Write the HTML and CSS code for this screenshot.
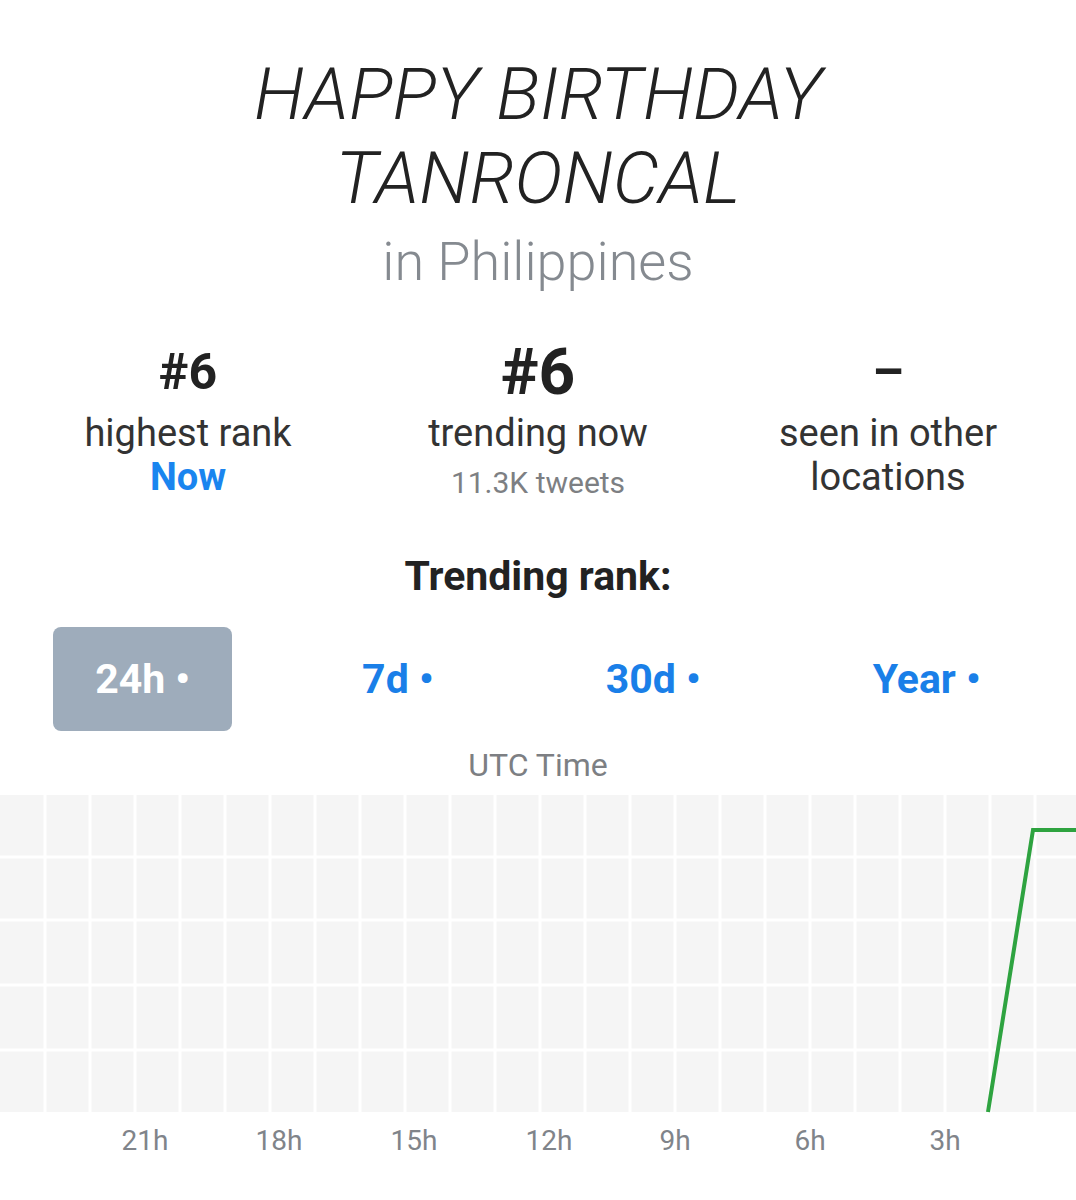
FILE: index.html
```html
<!DOCTYPE html>
<html lang="en">
<head>
    <meta charset="UTF-8">
    <meta name="viewport" content="width=device-width, initial-scale=1.0">
    <title>Happy Birthday Tanroncal - Trends</title>
    <link rel="stylesheet" href="styles.css">
</head>
<body>
    <div class="page">
        <h1 class="trend-title">HAPPY BIRTHDAY<br>TANRONCAL</h1>
        <p class="trend-place">in Philippines</p>

        <div class="stats">
            <div class="stat">
                <div class="stat-value">#6</div>
                <div class="stat-label">highest rank</div>
                <div class="stat-link">Now</div>
            </div>
            <div class="stat">
                <div class="stat-value big">#6</div>
                <div class="stat-label">trending now</div>
                <div class="stat-sub">11.3K tweets</div>
            </div>
            <div class="stat">
                <div class="stat-value">–</div>
                <div class="stat-label">seen in other<br>locations</div>
            </div>
        </div>

        <h2 class="section-title">Trending rank:</h2>

        <div class="ranges">
            <button class="range active">24h •</button>
            <button class="range">7d •</button>
            <button class="range">30d •</button>
            <button class="range">Year •</button>
        </div>

        <div class="axis-title">UTC Time</div>

        <svg class="chart" width="1076" height="372" viewBox="0 0 1076 372">
            <rect x="0" y="0" width="1076" height="317" fill="#f5f5f5"/>
            <g stroke="#ffffff" stroke-width="3">
                <line x1="45" y1="0" x2="45" y2="317"/>
                <line x1="90" y1="0" x2="90" y2="317"/>
                <line x1="135" y1="0" x2="135" y2="317"/>
                <line x1="180" y1="0" x2="180" y2="317"/>
                <line x1="225" y1="0" x2="225" y2="317"/>
                <line x1="270" y1="0" x2="270" y2="317"/>
                <line x1="315" y1="0" x2="315" y2="317"/>
                <line x1="360" y1="0" x2="360" y2="317"/>
                <line x1="405" y1="0" x2="405" y2="317"/>
                <line x1="450" y1="0" x2="450" y2="317"/>
                <line x1="495" y1="0" x2="495" y2="317"/>
                <line x1="540" y1="0" x2="540" y2="317"/>
                <line x1="585" y1="0" x2="585" y2="317"/>
                <line x1="630" y1="0" x2="630" y2="317"/>
                <line x1="675" y1="0" x2="675" y2="317"/>
                <line x1="720" y1="0" x2="720" y2="317"/>
                <line x1="765" y1="0" x2="765" y2="317"/>
                <line x1="810" y1="0" x2="810" y2="317"/>
                <line x1="855" y1="0" x2="855" y2="317"/>
                <line x1="900" y1="0" x2="900" y2="317"/>
                <line x1="945" y1="0" x2="945" y2="317"/>
                <line x1="990" y1="0" x2="990" y2="317"/>
                <line x1="1035" y1="0" x2="1035" y2="317"/>
                <line x1="0" y1="62" x2="1076" y2="62"/>
                <line x1="0" y1="125" x2="1076" y2="125"/>
                <line x1="0" y1="190" x2="1076" y2="190"/>
                <line x1="0" y1="255" x2="1076" y2="255"/>
            </g>
            <polyline points="988,317 1033,35 1076,35" fill="none" stroke="#2ea340" stroke-width="4"/>
            <g class="tick">
                <text x="145" y="355">21h</text>
                <text x="279" y="355">18h</text>
                <text x="414" y="355">15h</text>
                <text x="549" y="355">12h</text>
                <text x="675" y="355">9h</text>
                <text x="810" y="355">6h</text>
                <text x="945" y="355">3h</text>
            </g>
        </svg>
    </div>
</body>
</html>
```

FILE: styles.css
```css
body {
    font-family: Roboto, "Liberation Sans", sans-serif;
    background-color: #fff;
    color: #222;
    margin: 0;
    padding: 0;
}
.page {
    width: 1076px;
    text-align: center;
}
.trend-title {
    margin: 52px 0 0;
    font-size: 73px;
    line-height: 84px;
    font-weight: 300;
    font-style: italic;
    color: #222;
}
.trend-place {
    margin: 12px 0 0;
    font-size: 54px;
    line-height: 60px;
    font-weight: 300;
    color: #858a90;
}
.stats {
    display: flex;
    padding: 0 13px;
    margin-top: 48px;
}
.stat {
    flex: 1;
}
.stat-value {
    height: 64px;
    display: flex;
    align-items: center;
    justify-content: center;
    font-size: 50px;
    font-weight: bold;
    color: #222;
}
.stat-value.big {
    font-size: 64px;
}
.stat-label {
    font-size: 38px;
    line-height: 44px;
    color: #333;
    margin-top: 7px;
}
.stat-link {
    font-size: 38px;
    line-height: 44px;
    font-weight: bold;
    color: #1a85ef;
}
.stat-sub {
    font-size: 30px;
    line-height: 44px;
    color: #7d7f83;
    padding-top: 6px;
}
.section-title {
    margin: 49px 0 0;
    font-size: 41px;
    line-height: 44px;
    font-weight: bold;
    color: #222;
}
.ranges {
    display: flex;
    justify-content: center;
    gap: 88px;
    margin-top: 29px;
}
.range {
    height: 104px;
    padding: 0 42px;
    border: none;
    border-radius: 8px;
    background: none;
    font-family: inherit;
    font-size: 41px;
    font-weight: bold;
    color: #1a7fe8;
    cursor: pointer;
}
.range.active {
    background-color: #9eacbb;
    color: #fff;
}
.axis-title {
    margin-top: 16px;
    font-size: 32px;
    line-height: 36px;
    color: #7d7f83;
}
.chart {
    display: block;
    margin-top: 12px;
}
.tick text {
    font-family: Roboto, "Liberation Sans", sans-serif;
    font-size: 28px;
    fill: #80848a;
    text-anchor: middle;
}
```
